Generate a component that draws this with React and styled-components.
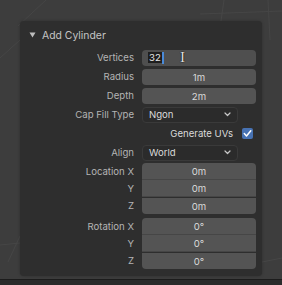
import React from 'react'
import styled, { createGlobalStyle } from 'styled-components'

const GlobalStyle = createGlobalStyle`
  html, body {
    margin: 0;
    padding: 0;
    background: #3d3d3d;
  }
  * { box-sizing: border-box; }
`

export default function App() {
  return (
    <>
      <GlobalStyle />
      <Page>
        <Viewport>
          <GridLines width="282" height="279" viewBox="0 0 282 279">
            <line x1="46" y1="0" x2="18" y2="26" />
            <line x1="0" y1="58" x2="20" y2="40" />
            <line x1="200" y1="14" x2="282" y2="11" />
            <line x1="224" y1="0" x2="221" y2="21" />
            <line x1="268" y1="0" x2="270" y2="40" />
            <line x1="262" y1="262" x2="282" y2="258" />
            <line x1="20" y1="236" x2="8" y2="262" />
            <line x1="0" y1="245" x2="20" y2="243" />
          </GridLines>
          <Panel>
            <PanelHeader>
              <Caret />
              Add Cylinder
            </PanelHeader>
            <Body>
              <Row>
                <Label>Vertices</Label>
                <EditField>
                  <Selected>32</Selected>
                  <TextCursor />
                  <IBeam>I</IBeam>
                </EditField>
              </Row>
              <Row>
                <Label>Radius</Label>
                <Field>1m</Field>
              </Row>
              <Row>
                <Label>Depth</Label>
                <Field>2m</Field>
              </Row>
              <Row>
                <Label>Cap Fill Type</Label>
                <Dropdown>
                  Ngon
                  <Chevron />
                </Dropdown>
              </Row>
              <CheckRow>
                <CheckLabel>Generate UVs</CheckLabel>
                <CheckBox>
                  <svg width="11" height="11" viewBox="0 0 11 11">
                    <path d="M2.3 5.6 L4.5 7.9 L8.8 2.8" fill="none" stroke="#ffffff" strokeWidth="1.5" strokeLinecap="round" strokeLinejoin="round" />
                  </svg>
                </CheckBox>
              </CheckRow>
              <Row>
                <Label>Align</Label>
                <Dropdown>
                  World
                  <Chevron />
                </Dropdown>
              </Row>
              <Group>
                <Row>
                  <Label>Location X</Label>
                  <Field $pos="top">0m</Field>
                </Row>
                <Row>
                  <Label>Y</Label>
                  <Field $pos="mid">0m</Field>
                </Row>
                <Row>
                  <Label>Z</Label>
                  <Field $pos="bottom">0m</Field>
                </Row>
              </Group>
              <Group>
                <Row>
                  <Label>Rotation X</Label>
                  <Field $pos="top">0°</Field>
                </Row>
                <Row>
                  <Label>Y</Label>
                  <Field $pos="mid">0°</Field>
                </Row>
                <Row>
                  <Label>Z</Label>
                  <Field $pos="bottom">0°</Field>
                </Row>
              </Group>
            </Body>
          </Panel>
        </Viewport>
        <BottomBar />
      </Page>
    </>
  )
}

function Caret() {
  return (
    <CaretIcon width="7" height="6" viewBox="0 0 7 6">
      <path d="M0.5 0.5 L6.5 0.5 L3.5 5.5 Z" fill="#bdbdbd" />
    </CaretIcon>
  )
}

function Chevron() {
  return (
    <ChevronIcon width="7" height="5" viewBox="0 0 7 5">
      <path d="M1 1 L3.5 3.5 L6 1" fill="none" stroke="#c8c8c8" strokeWidth="1.2" strokeLinecap="round" strokeLinejoin="round" />
    </ChevronIcon>
  )
}

const Page = styled.div`
  width: 282px;
  height: 285px;
  overflow: hidden;
  display: flex;
  flex-direction: column;
  font-family: Inter, 'DejaVu Sans', sans-serif;
  font-size: 9.6px;
`

const Viewport = styled.div`
  position: relative;
  height: 279px;
  background: #3d3d3d;
  padding: 21px 20px 0 20px;
`

const GridLines = styled.svg`
  position: absolute;
  left: 0;
  top: 0;
  stroke: #464646;
  stroke-width: 1;
`

const BottomBar = styled.div`
  height: 6px;
  background: #2b2b2b;
  border-top: 1px solid #1c1c1c;
`

const Panel = styled.div`
  position: relative;
  width: 242px;
  height: 255px;
  background: #2e2e2e;
  border-radius: 4px;
  box-shadow: 0 0 3px rgba(0, 0, 0, 0.25);
`

const PanelHeader = styled.div`
  height: 28px;
  display: flex;
  align-items: center;
  padding-left: 9px;
  color: #c4c4c4;
  font-size: 10.4px;
`

const CaretIcon = styled.svg`
  margin-right: 6px;
`

const Body = styled.div`
  display: flex;
  flex-direction: column;
  gap: 2px;
`

const Row = styled.div`
  display: grid;
  grid-template-columns: 114px 1fr;
  column-gap: 8px;
  align-items: center;
  height: 17px;
  padding-right: 6px;
`

const Group = styled.div`
  display: flex;
  flex-direction: column;
  margin-bottom: 2px;
`

const Label = styled.div`
  text-align: right;
  color: #b4b4b4;
  white-space: nowrap;
`

const radius = {
  top: '4px 4px 0 0',
  mid: '0',
  bottom: '0 0 4px 4px',
}

const Field = styled.div`
  height: ${p => (p.$pos === 'mid' || p.$pos === 'top' ? '17px' : '16px')};
  background: #545454;
  border-radius: ${p => radius[p.$pos] || '4px'};
  border-bottom: ${p => (p.$pos === 'top' || p.$pos === 'mid' ? '1px solid #464646' : 'none')};
  color: #dadada;
  display: flex;
  align-items: center;
  justify-content: center;
  padding-top: 1px;
`

const EditField = styled.div`
  position: relative;
  height: 16px;
  background: #4f4f4f;
  border-radius: 4px;
  display: flex;
  align-items: center;
  padding-left: 6px;
  color: #e6e6e6;
`

const Selected = styled.span`
  background: #1e1e1e;
  padding: 0 1px;
  line-height: 11px;
`

const TextCursor = styled.span`
  width: 2px;
  height: 12px;
  background: #4a8ad9;
`

const IBeam = styled.span`
  position: absolute;
  left: 38px;
  top: 0px;
  font-family: 'Liberation Serif', serif;
  font-size: 15px;
  line-height: 15px;
  color: #e0e0e0;
  text-shadow: 0 0 1px #000, 0 0 1px #000;
`

const Dropdown = styled.div`
  width: 96px;
  height: 16px;
  background: #2b2b2b;
  border: 1px solid #3a3a3a;
  border-radius: 4px;
  color: #dadada;
  display: flex;
  align-items: center;
  justify-content: space-between;
  padding: 0 6px 0 6px;
`

const ChevronIcon = styled.svg`
  flex: none;
`

const CheckRow = styled.div`
  height: 17px;
  display: flex;
  align-items: center;
  justify-content: flex-end;
  padding-right: 9px;
  gap: 9px;
`

const CheckLabel = styled.div`
  color: #dadada;
`

const CheckBox = styled.div`
  width: 11px;
  height: 11px;
  border-radius: 2px;
  background: #4772b3;
  display: flex;
`
